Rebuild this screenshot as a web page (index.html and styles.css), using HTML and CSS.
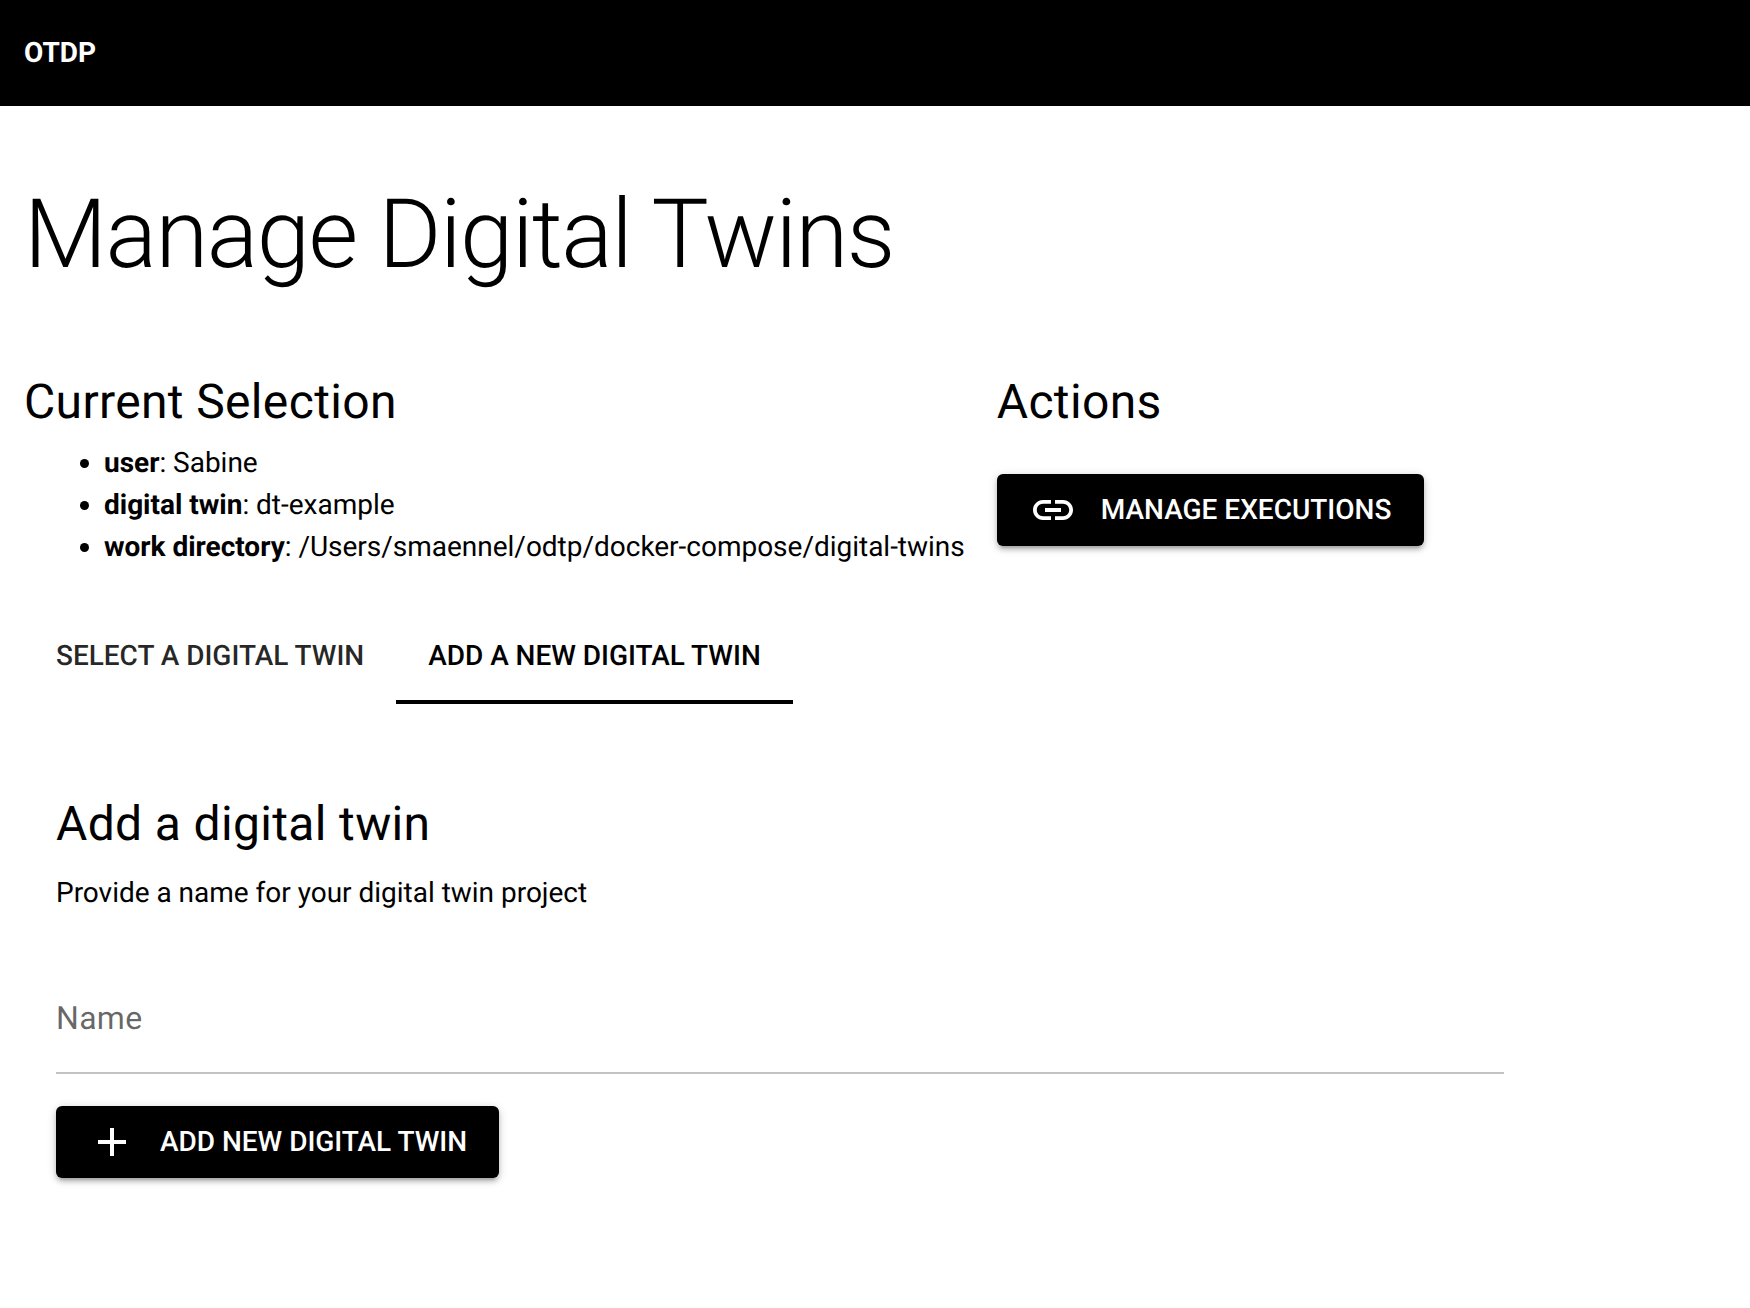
FILE: index.html
```html
<!DOCTYPE html>
<html lang="en">
<head>
  <meta charset="utf-8">
  <title>Manage Digital Twins</title>
  <link rel="stylesheet" href="styles.css">
</head>
<body>
  <header class="header">OTDP</header>
  <main class="page">
    <h1 class="page-title">Manage Digital Twins</h1>
    <div class="overview">
      <section>
        <h2 class="heading">Current Selection</h2>
        <ul class="selection">
          <li><strong>user</strong>: Sabine</li>
          <li><strong>digital twin</strong>: dt-example</li>
          <li><strong>work directory</strong>: /Users/smaennel/odtp/docker-compose/digital-twins</li>
        </ul>
      </section>
      <section>
        <h2 class="heading">Actions</h2>
        <button class="btn btn-manage" type="button">
          <svg class="icon" viewBox="0 0 24 24"><path d="M3.9 12c0-1.71 1.39-3.1 3.1-3.1h4V7H7c-2.76 0-5 2.24-5 5s2.24 5 5 5h4v-1.9H7c-1.71 0-3.1-1.39-3.1-3.1zM8 13h8v-2H8v2zm9-6h-4v1.9h4c1.71 0 3.1 1.39 3.1 3.1s-1.39 3.1-3.1 3.1h-4V17h4c2.76 0 5-2.24 5-5s-2.24-5-5-5z"/></svg>
          <span>Manage Executions</span>
        </button>
      </section>
    </div>
    <nav class="tabs">
      <a class="tab">Select a digital twin</a>
      <a class="tab tab-active">Add a new digital twin</a>
    </nav>
    <section class="panel">
      <h2 class="heading">Add a digital twin</h2>
      <p class="hint">Provide a name for your digital twin project</p>
      <label class="field">Name</label>
      <button class="btn btn-add" type="button">
        <svg class="icon" viewBox="0 0 24 24"><path d="M19 13h-6v6h-2v-6H5v-2h6V5h2v6h6v2z"/></svg>
        <span>Add new digital twin</span>
      </button>
    </section>
  </main>
</body>
</html>
```
FILE: styles.css
```css
* {
  box-sizing: border-box;
}

body {
  min-height: 100vh;
  margin: 0;
  background: #fff;
  color: #000;
  font: 400 28px/42px Roboto, sans-serif;
  letter-spacing: -0.015px;
  text-rendering: geometricPrecision;
}

.header {
  display: flex;
  align-items: center;
  height: 106px;
  padding: 0 24px;
  background: #000;
  color: #fff;
  font-weight: 700;
}

.page {
  padding: 73px 24px 64px;
}

.page-title {
  margin: 0;
  font-size: 96px;
  font-weight: 300;
  line-height: 112px;
  letter-spacing: -0.01562em;
}

.overview {
  display: flex;
  gap: 32px;
  margin-top: 79px;
}

.heading {
  margin: 0;
  font-size: 48px;
  font-weight: 400;
  line-height: 64px;
  letter-spacing: 0.00735em;
}

.selection {
  margin: 8px 0 0;
  padding-left: 80px;
}

.btn {
  display: flex;
  align-items: center;
  gap: 24px;
  height: 72px;
  padding: 0 32px;
  border: 0;
  border-radius: 6px;
  background: #000;
  color: #fff;
  font: 500 28px/48px Roboto, sans-serif;
  text-rendering: inherit;
  text-transform: uppercase;
  white-space: nowrap;
  box-shadow: 0 2px 10px rgba(0, 0, 0, 0.2), 0 4px 4px rgba(0, 0, 0, 0.14), 0 6px 2px -4px rgba(0, 0, 0, 0.12);
}

.btn-manage {
  min-width: 427px;
  margin-top: 40px;
}

.btn-add {
  letter-spacing: -0.03px;
}

.icon {
  width: 48px;
  height: 48px;
  fill: currentColor;
}

.tabs {
  display: flex;
  margin-top: 40px;
}

.tab {
  height: 96px;
  padding: 27px 32px 23px;
  border-bottom: 4px solid transparent;
  color: rgba(0, 0, 0, 0.85);
  font-weight: 500;
  letter-spacing: -0.03px;
  text-transform: uppercase;
}

.tab-active {
  border-color: #000;
  color: #000;
}

.panel {
  padding: 88px 32px 0;
}

.hint {
  margin: 16px 0 48px;
}

.field {
  display: block;
  width: 1448px;
  height: 112px;
  margin-bottom: 32px;
  padding-top: 32px;
  border-bottom: 2px solid #c2c2c2;
  color: rgba(0, 0, 0, 0.6);
  font-size: 32px;
  line-height: 48px;
  letter-spacing: 0.00937em;
}
```
